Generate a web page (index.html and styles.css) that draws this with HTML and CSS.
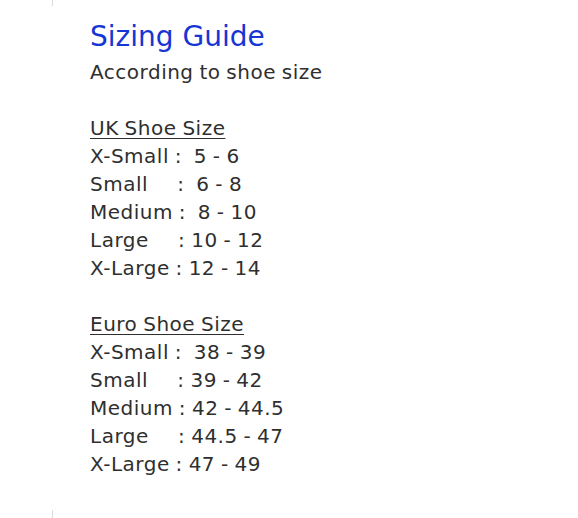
FILE: index.html
```html
<!DOCTYPE html>
<html>
<head>
<meta charset="utf-8">
<link rel="stylesheet" href="styles.css">
</head>
<body>
<div class="page">
  <div class="guide">
    <h1 class="title">Sizing Guide</h1>
    <p class="subtitle">According to shoe size</p>
    <div class="blank"></div>
    <p class="section-head">UK Shoe Size</p>
    <p class="row">X-Small :  5 - 6</p>
    <p class="row">Small     :  6 - 8</p>
    <p class="row">Medium :  8 - 10</p>
    <p class="row">Large     : 10 - 12</p>
    <p class="row">X-Large : 12 - 14</p>
    <div class="blank"></div>
    <p class="section-head">Euro Shoe Size</p>
    <p class="row">X-Small :  38 - 39</p>
    <p class="row">Small     : 39 - 42</p>
    <p class="row">Medium : 42 - 44.5</p>
    <p class="row">Large     : 44.5 - 47</p>
    <p class="row">X-Large : 47 - 49</p>
  </div>
</div>
</body>
</html>
```
FILE: styles.css
```css
html, body {
  margin: 0;
  padding: 0;
  background: #ffffff;
}
.page {
  width: 578px;
  height: 518px;
  position: relative;
  box-sizing: border-box;
  padding: 22px 0 0 90px;
  font-family: "DejaVu Sans", "Liberation Sans", sans-serif;
  color: #2f2f2f;
}
.page::before,
.page::after {
  content: "";
  position: absolute;
  left: 52px;
  width: 1px;
  background: #dcdcdc;
}
.page::before { top: 0; height: 6px; }
.page::after { bottom: 0; height: 8px; }
.title {
  margin: 0 0 6px;
  font-size: 28px;
  font-weight: normal;
  line-height: 30px;
  color: #1535d4;
}
.subtitle,
.section-head,
.row {
  margin: 0;
  font-size: 20px;
  line-height: 28px;
  letter-spacing: 0.5px;
  word-spacing: -1px;
  white-space: pre;
}
.blank { height: 28px; }
.section-head {
  text-decoration: underline;
  text-underline-offset: 3px;
  text-decoration-thickness: 1px;
}
```
